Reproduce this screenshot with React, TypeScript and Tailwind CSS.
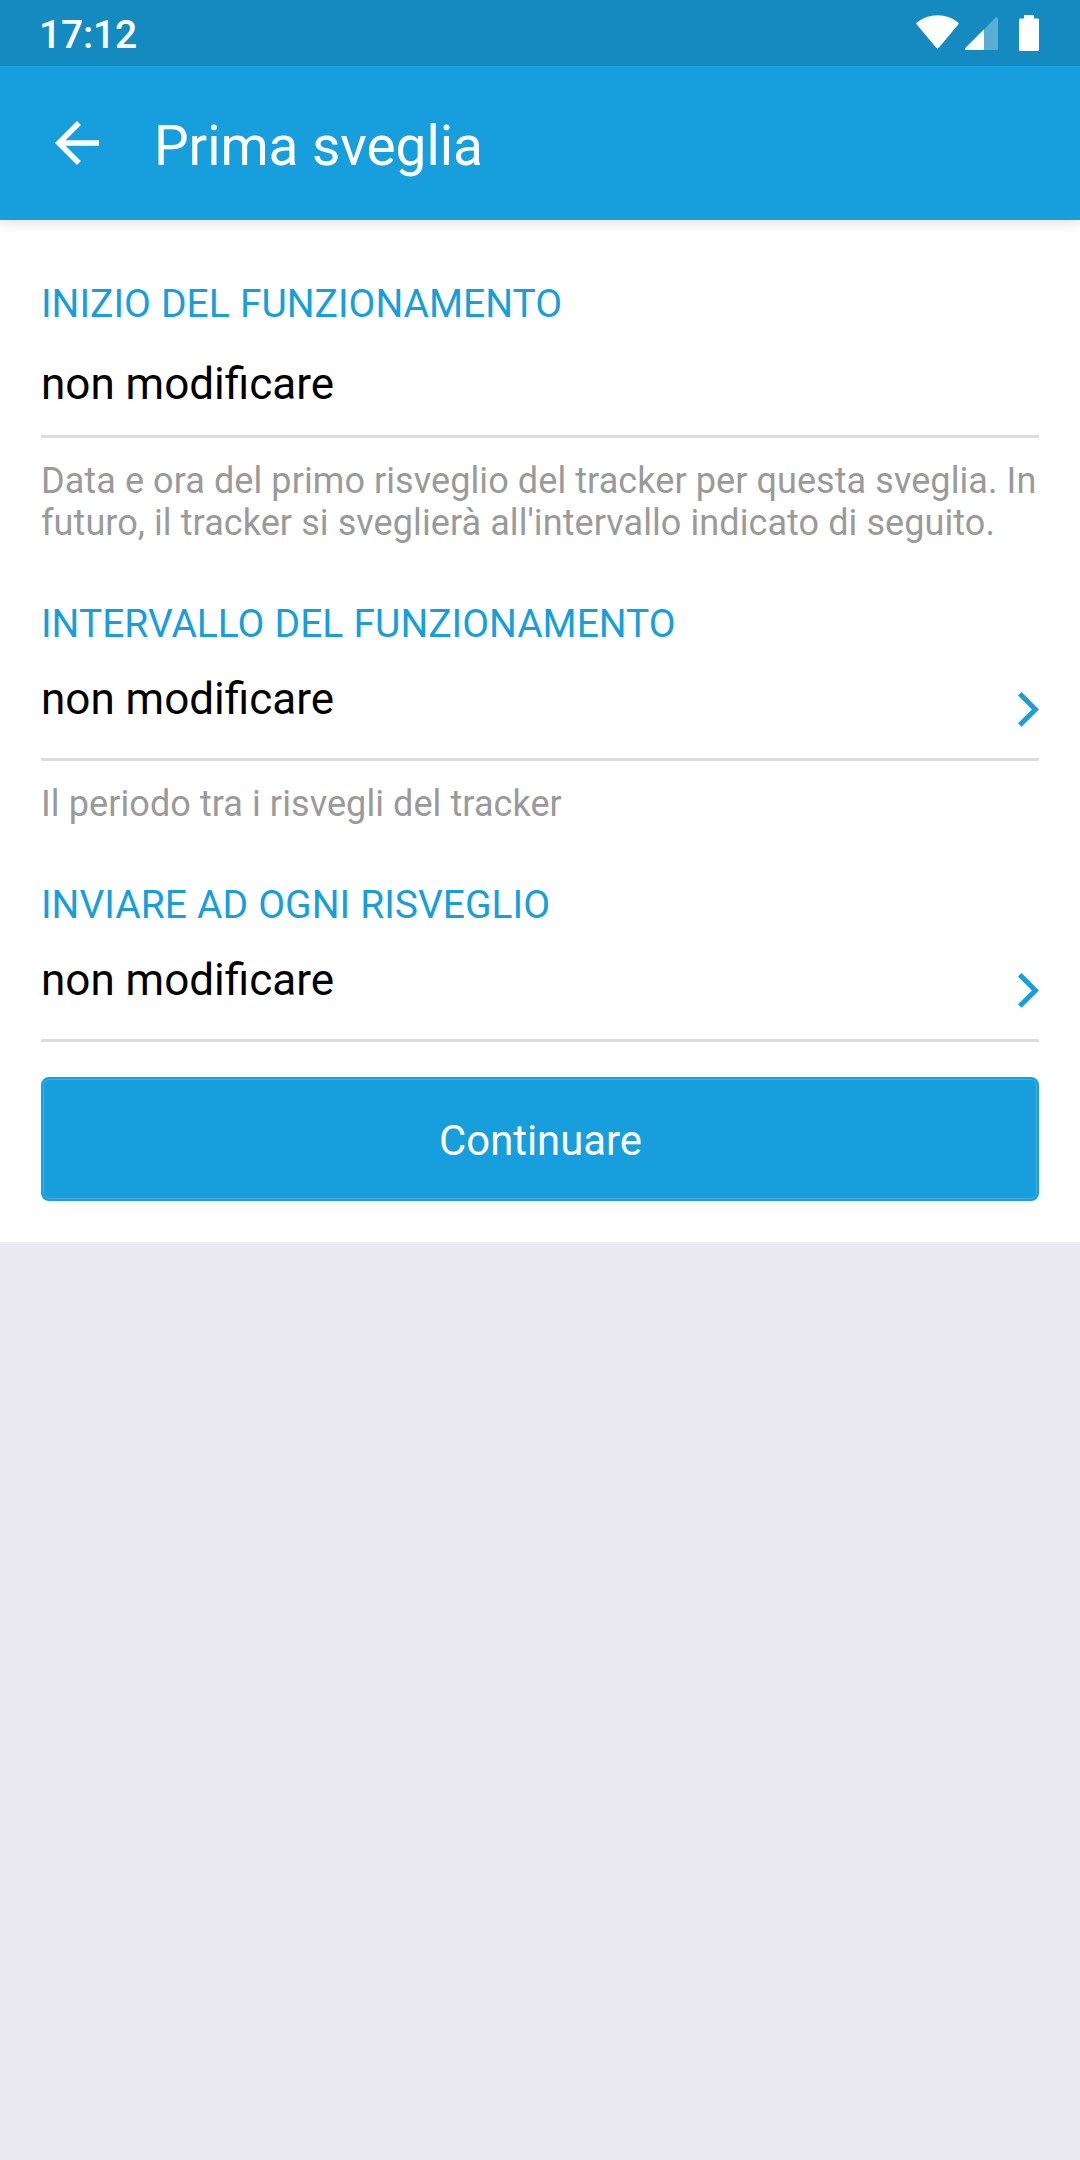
type SectionProps = {
  title: string
  value: string
  hint?: string
  arrow?: boolean
}

const sections: SectionProps[] = [
  {
    title: "INIZIO DEL FUNZIONAMENTO",
    value: "non modificare",
    hint: "Data e ora del primo risveglio del tracker per questa sveglia. In futuro, il tracker si sveglierà all'intervallo indicato di seguito.",
  },
  {
    title: "INTERVALLO DEL FUNZIONAMENTO",
    value: "non modificare",
    hint: "Il periodo tra i risvegli del tracker",
    arrow: true,
  },
  {
    title: "INVIARE AD OGNI RISVEGLIO",
    value: "non modificare",
    arrow: true,
  },
]

function StatusBar() {
  return (
    <div className="relative z-10 flex h-[66px] items-center justify-between bg-[#148ac0] pl-[39px] pr-[41px] text-white">
      <span className="pt-[3px] text-[39px] font-medium leading-[46px] tracking-[-0.2px]">17:12</span>
      <div className="flex h-full items-start pt-[15px]">
        <svg width="43" height="34" viewBox="0 0 43 34" fill="currentColor">
          <path d="M0.8 9.6Q-0.2 8.2 1.2 7.2Q10 0.3 21.5 0.3Q33 0.3 41.8 7.2Q43.2 8.2 42.2 9.6L23 32.6Q21.5 34.2 20 32.6Z" />
        </svg>
        <svg className="ml-[6px] mt-[2px]" width="33" height="33" viewBox="0 0 33 33" fill="currentColor">
          <path d="M19 12.6L30.4 0.7Q33 -0.8 33 2V31.5Q33 33 31.5 33H19Z" opacity="0.3" />
          <path d="M19 12.3V33H1.5Q-0.8 33 0.5 30.8Z" />
        </svg>
        <svg className="ml-[21px]" width="20" height="36" viewBox="0 0 20 36" fill="currentColor">
          <path d="M5 0H15V3.6H18.6Q20 3.6 20 5V34.4Q20 36 18.6 36H1.4Q0 36 0 34.4V5Q0 3.6 1.4 3.6H5Z" />
        </svg>
      </div>
    </div>
  )
}

function AppBar() {
  return (
    <header className="flex h-[154px] items-center bg-[#179edc] pl-[44px] text-white shadow-[0_3px_12px_rgba(0,0,0,0.13)]">
      <button aria-label="Indietro">
        <svg width="66" height="66" viewBox="0 0 24 24" fill="currentColor">
          <path d="M20 11H7.83l5.59-5.59L12 4l-8 8 8 8 1.41-1.41L7.83 13H20v-2z" />
        </svg>
      </button>
      <h1 className="ml-[44px] pt-[6px] text-[55px] leading-[64px] tracking-[-0.08px]">Prima sveglia</h1>
    </header>
  )
}

function Chevron() {
  return (
    <svg className="mt-[19px]" width="21" height="35" viewBox="0 0 21 35" fill="none" stroke="#179edc" strokeWidth="5">
      <path d="M1.8 1.8L17.4 17.4L1.8 33" />
    </svg>
  )
}

function Section({ title, value, hint, arrow }: SectionProps) {
  return (
    <section>
      <h2 className="text-[39px] leading-[46px] text-[#179edc] [word-spacing:0.5px]">{title}</h2>
      <div
        className={`flex items-start justify-between border-b-[3px] border-[#dcdcdc] ${
          arrow ? "mt-[26px] h-[88px]" : "mt-[31px] h-[80px]"
        }`}
      >
        <span className="text-[44px] leading-[52px] text-black">{value}</span>
        {arrow && <Chevron />}
      </div>
      {hint && (
        <p className="mt-[22px] text-[36px] leading-[42px] tracking-[0.08px] text-[#9a9a9a]">{hint}</p>
      )}
    </section>
  )
}

export default function App() {
  return (
    <div className="flex h-[2160px] w-[1080px] flex-col bg-[#e9e9ef] font-['Roboto',sans-serif]">
      <div className="relative z-10">
        <StatusBar />
        <AppBar />
      </div>
      <main className="bg-white px-[41px] pb-[41px] pt-[61px]">
        <div className="flex flex-col gap-[57px]">
          {sections.map((section) => (
            <Section key={section.title} {...section} />
          ))}
        </div>
        <button className="mt-[35px] flex h-[124px] w-full items-center justify-center rounded-[8px] border-2 border-[#179edc] bg-[#179edc] text-[41.8px] leading-[50px] text-white shadow-[inset_0_0_0_1px_#45b0e2]">
          <span className="pl-px pt-[3px]">Continuare</span>
        </button>
      </main>
    </div>
  )
}
